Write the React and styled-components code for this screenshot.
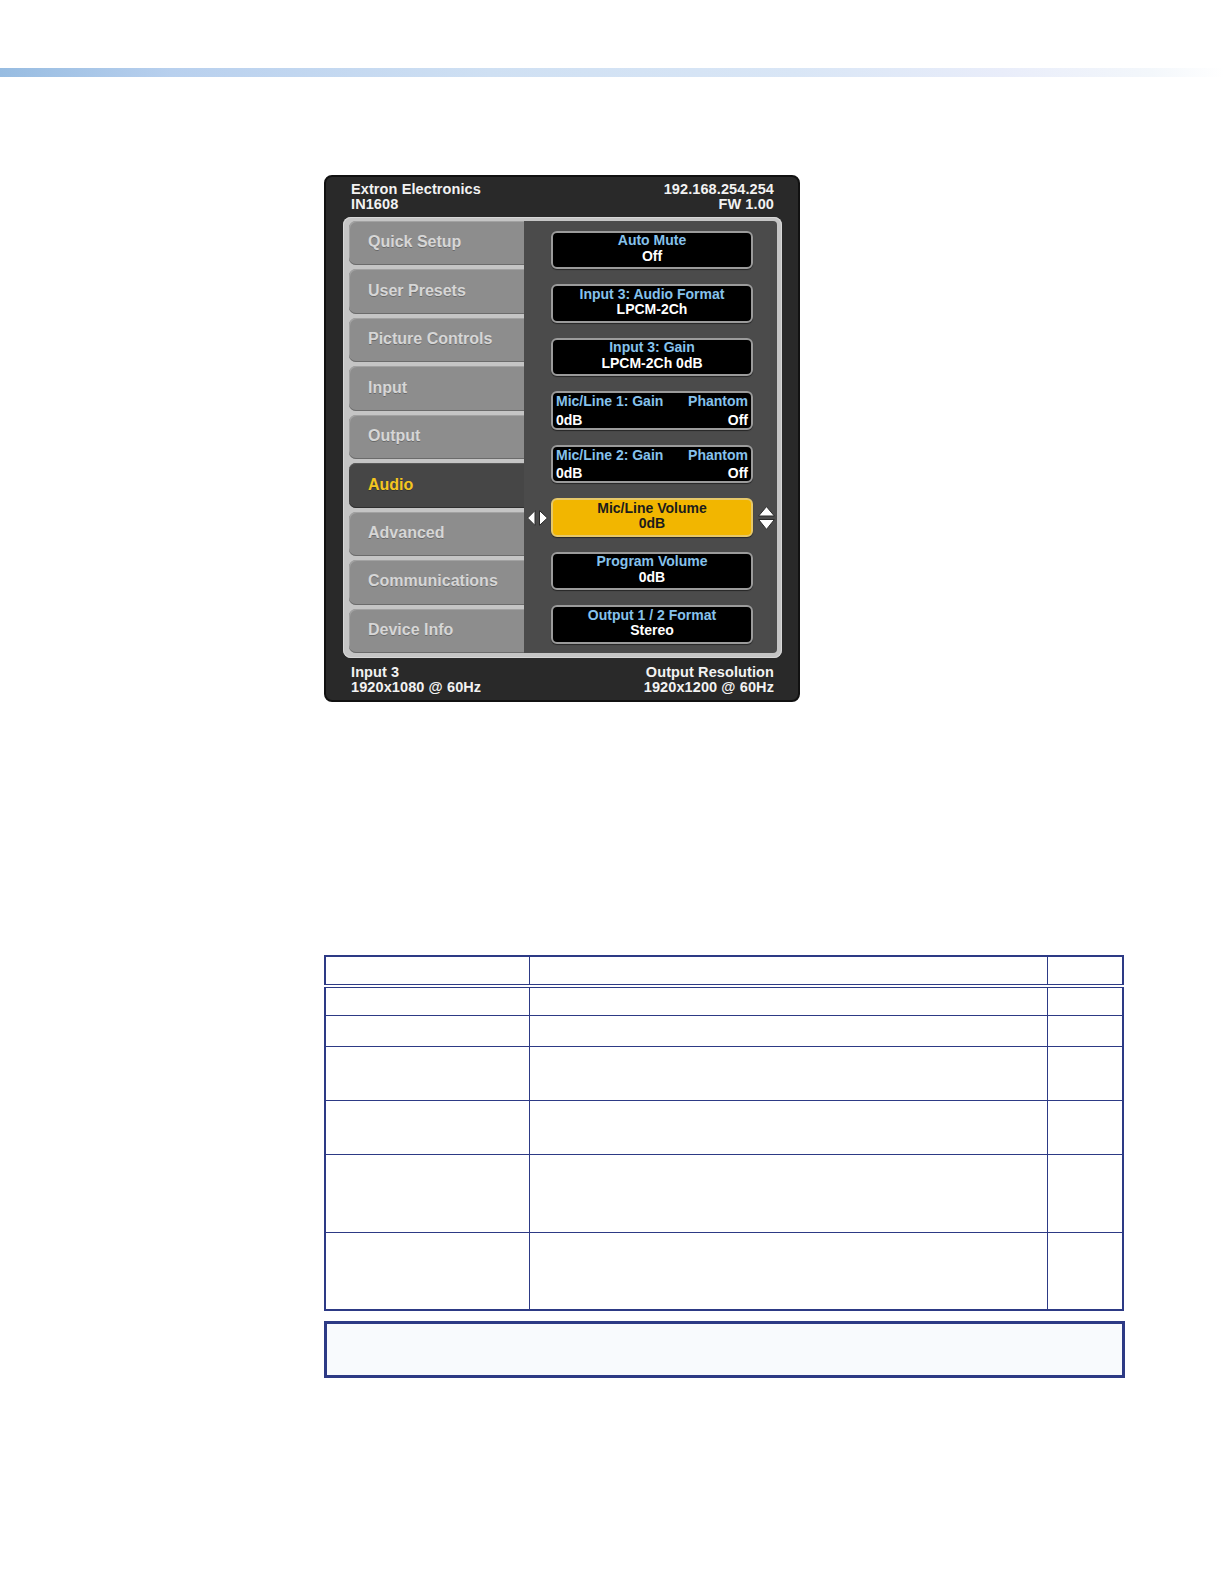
import React from "react";
import styled, { createGlobalStyle } from "styled-components";

const Global = createGlobalStyle`
  html, body { margin: 0; padding: 0; background: #ffffff; }
  body { font-family: "Liberation Sans", Arial, sans-serif; }
  * { box-sizing: border-box; }
`;

const Page = styled.div`
  width: 1224px;
  min-height: 1584px;
  padding-top: 68px;
`;

const TopBar = styled.div`
  height: 9px;
  width: 1224px;
  background: linear-gradient(
    to right,
    #97bce1 0%,
    #b8d0ee 14%,
    #cfe0f3 40%,
    #d9e6f6 65%,
    #e9edfa 82%,
    #f3f7fb 94%,
    #ffffff 100%
  );
`;

const Main = styled.div`
  padding-left: 324px;
  display: flex;
  flex-direction: column;
`;

const Device = styled.div`
  margin-top: 98px;
  width: 476px;
  height: 527px;
  background: #292929;
  border: 2px solid #111;
  border-radius: 8px;
  display: flex;
  flex-direction: column;
  color: #f2f2f2;
  font-weight: bold;
`;

const InfoBar = styled.div`
  display: flex;
  justify-content: space-between;
  padding: ${(p) => (p.$bottom ? "7px 24px 0 25px" : "5px 24px 0 25px")};
  height: ${(p) => (p.$bottom ? "auto" : "40px")};
  font-size: 14.5px;
  line-height: 14.5px;
  letter-spacing: 0.1px;
`;

const InfoCol = styled.div`
  display: flex;
  flex-direction: column;
  text-align: ${(p) => (p.$right ? "right" : "left")};
`;

const Frame = styled.div`
  margin-left: 17px;
  width: 439px;
  height: 441px;
  background: #c5c5c5;
  border-radius: 8px;
  padding: 4px 5px 5px 6px;
  display: grid;
  grid-template-columns: 175px 1fr;
  box-shadow: inset 0 0 0 1px #d8d8d8;
`;

const Menu = styled.div`
  display: grid;
  grid-template-rows: repeat(9, 44.2px);
  row-gap: 4.3px;
`;

const MenuItem = styled.div`
  display: flex;
  align-items: center;
  padding-left: 19px;
  padding-bottom: 2px;
  font-size: 16px;
  font-weight: bold;
  color: ${(p) => (p.$active ? "#f4c620" : "#d6d6d6")};
  background: ${(p) => (p.$active ? "#464646" : "#8d8d8d")};
  border-radius: 7px 0 0 7px;
  box-shadow: ${(p) =>
    p.$active
      ? "inset 0 -1px 0 #2e2e2e, inset 0 1px 0 #5a5a5a"
      : "inset 0 -1px 0 #6b6b6b, inset 1px 1px 0 #a2a2a2"};
  text-shadow: 0 1px 0 rgba(0, 0, 0, 0.25);
`;

const Panel = styled.div`
  background: #4b4b4b;
  padding-top: 10px;
  display: grid;
  grid-template-rows: repeat(8, 38.4px);
  row-gap: 15.1px;
  border-radius: 0 4px 4px 0;
`;

const Row = styled.div`
  display: grid;
  grid-template-columns: 27px 202px 1fr;
  align-items: center;
`;

const ArrowCell = styled.div`
  display: flex;
  align-items: center;
  justify-content: ${(p) => (p.$right ? "flex-start" : "flex-end")};
  padding: ${(p) => (p.$right ? "0 0 0 5px" : "0 3.5px 0 0")};
  height: 100%;
`;

const Setting = styled.div`
  height: 38.4px;
  border-radius: 6px;
  border: 2px solid ${(p) => (p.$selected ? "#e6c86a" : "#9b9b9b")};
  background: ${(p) => (p.$selected ? "#f2b600" : "#000")};
  display: flex;
  flex-direction: column;
  justify-content: ${(p) => (p.$split ? "space-between" : "center")};
  align-items: ${(p) => (p.$split ? "stretch" : "center")};
  padding: ${(p) => (p.$split ? "0 3px 0 3px" : "0 0 3px 0")};
  font-size: 14px;
  line-height: ${(p) => (p.$split ? "16px" : "15.5px")};
  font-weight: bold;
  box-shadow: 0 1px 1px rgba(0, 0, 0, 0.5);
`;

const Line = styled.div`
  display: flex;
  justify-content: space-between;
`;

const Title = styled.span`
  color: ${(p) => (p.$selected ? "#1c1c1c" : "#86c2ec")};
`;

const Value = styled.span`
  color: ${(p) => (p.$selected ? "#1c1c1c" : "#ffffff")};
`;

const Table = styled.table`
  margin-top: 253px;
  width: 798px;
  border-collapse: collapse;
  border: 2px solid #2d3a85;
  table-layout: fixed;
`;

const Cell = styled.td`
  border: 1px solid #2d3a85;
  height: ${(p) => p.$h}px;
  padding: 0;
`;

const HeadCell = styled.th`
  border: 1px solid #2d3a85;
  border-bottom: 4px double #2d3a85;
  height: 30px;
  padding: 0;
`;

const Note = styled.div`
  margin-top: 10px;
  width: 801px;
  height: 57px;
  border: 3px solid #2d3a85;
  background: #f8fafd;
`;

const LeftRightArrows = () => (
  <svg width="21" height="16" viewBox="0 0 21 16">
    <polygon points="8,0.6 8,15.4 0.6,8" fill="#fff" stroke="#2a2a2a" strokeWidth="1" />
    <polygon points="12.5,0.6 12.5,15.4 20.4,8" fill="#fff" stroke="#2a2a2a" strokeWidth="1" />
  </svg>
);

const UpDownArrows = () => (
  <svg width="17" height="24" viewBox="0 0 17 24">
    <polygon points="8.5,0.6 16.4,10 0.6,10" fill="#fff" stroke="#2a2a2a" strokeWidth="1" />
    <polygon points="0.6,13.5 16.4,13.5 8.5,23.4" fill="#fff" stroke="#2a2a2a" strokeWidth="1" />
  </svg>
);

const menu = [
  "Quick Setup",
  "User Presets",
  "Picture Controls",
  "Input",
  "Output",
  "Audio",
  "Advanced",
  "Communications",
  "Device Info",
];

const settings = [
  { title: "Auto Mute", value: "Off" },
  { title: "Input 3: Audio Format", value: "LPCM-2Ch" },
  { title: "Input 3: Gain", value: "LPCM-2Ch 0dB" },
  { title: "Mic/Line 1: Gain", right: "Phantom", value: "0dB", rightValue: "Off" },
  { title: "Mic/Line 2: Gain", right: "Phantom", value: "0dB", rightValue: "Off" },
  { title: "Mic/Line Volume", value: "0dB", selected: true },
  { title: "Program Volume", value: "0dB" },
  { title: "Output 1 / 2 Format", value: "Stereo" },
];

const rowHeights = [29, 31, 54, 54, 78, 78];

export default function App() {
  return (
    <Page>
      <Global />
      <TopBar />
      <Main>
        <Device>
          <InfoBar>
            <InfoCol>
              <span>Extron Electronics</span>
              <span>IN1608</span>
            </InfoCol>
            <InfoCol $right>
              <span>192.168.254.254</span>
              <span>FW 1.00</span>
            </InfoCol>
          </InfoBar>
          <Frame>
            <Menu>
              {menu.map((m) => (
                <MenuItem key={m} $active={m === "Audio"}>
                  {m}
                </MenuItem>
              ))}
            </Menu>
            <Panel>
              {settings.map((s) => (
                <Row key={s.title}>
                  <ArrowCell>{s.selected && <LeftRightArrows />}</ArrowCell>
                  {s.right ? (
                    <Setting $split>
                      <Line>
                        <Title>{s.title}</Title>
                        <Title>{s.right}</Title>
                      </Line>
                      <Line>
                        <Value>{s.value}</Value>
                        <Value>{s.rightValue}</Value>
                      </Line>
                    </Setting>
                  ) : (
                    <Setting $selected={s.selected}>
                      <Title $selected={s.selected}>{s.title}</Title>
                      <Value $selected={s.selected}>{s.value}</Value>
                    </Setting>
                  )}
                  <ArrowCell $right>{s.selected && <UpDownArrows />}</ArrowCell>
                </Row>
              ))}
            </Panel>
          </Frame>
          <InfoBar $bottom>
            <InfoCol>
              <span>Input 3</span>
              <span>1920x1080 @ 60Hz</span>
            </InfoCol>
            <InfoCol $right>
              <span>Output Resolution</span>
              <span>1920x1200 @ 60Hz</span>
            </InfoCol>
          </InfoBar>
        </Device>
        <Table>
          <colgroup>
            <col style={{ width: "204px" }} />
            <col style={{ width: "518px" }} />
            <col style={{ width: "76px" }} />
          </colgroup>
          <thead>
            <tr>
              <HeadCell />
              <HeadCell />
              <HeadCell />
            </tr>
          </thead>
          <tbody>
            {rowHeights.map((h, i) => (
              <tr key={i}>
                <Cell $h={h} />
                <Cell $h={h} />
                <Cell $h={h} />
              </tr>
            ))}
          </tbody>
        </Table>
        <Note />
      </Main>
    </Page>
  );
}
